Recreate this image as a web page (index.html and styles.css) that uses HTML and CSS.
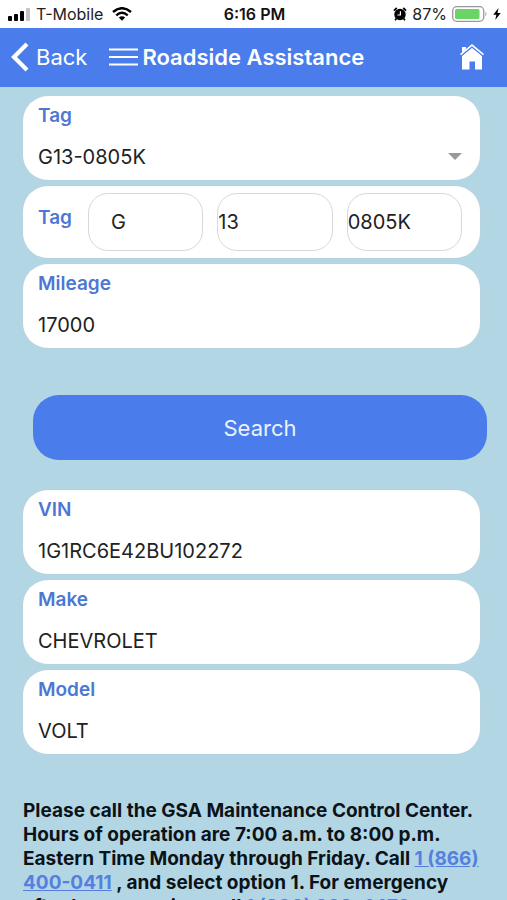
FILE: index.html
```html
<!DOCTYPE html>
<html lang="en">
<head>
<meta charset="utf-8">
<meta name="viewport" content="width=device-width, initial-scale=1">
<title>Roadside Assistance</title>
<link rel="stylesheet" href="styles.css">
</head>
<body>
<div class="status">
  <div class="status-left">
    <svg width="23" height="13" viewBox="0 0 23 13" aria-hidden="true">
      <rect x="0" y="8" width="4" height="5" rx="1" fill="#000"/>
      <rect x="6" y="6" width="4" height="7" rx="1" fill="#000"/>
      <rect x="12" y="3" width="4" height="10" rx="1" fill="#000"/>
      <rect x="18" y="0" width="4" height="13" rx="1" fill="#c4c4c4"/>
    </svg>
    <span>T-Mobile</span>
    <svg class="wifi" width="20" height="14" viewBox="0 0 20 14" fill="none" stroke="#000" stroke-width="2.4" aria-hidden="true">
      <path d="M1 5Q10 -2.6 19 5M4.3 8.3Q10 3.4 15.7 8.3"/>
      <path d="M6.8 10.6Q10 8 13.2 10.6L10 13.8Z" fill="#000" stroke="none"/>
    </svg>
  </div>
  <span class="clock">6:16 PM</span>
  <div class="status-right">
    <svg width="14" height="14" viewBox="0 0 14 14" aria-hidden="true">
      <circle cx="7" cy="7.5" r="5.7"/>
      <path d="M.9 3.6L3.8 1M13.1 3.6L10.2 1M3.5 11.5L2 13.3M10.5 11.5L12 13.3" stroke="#000" stroke-width="1.7"/>
      <path d="M7.4 4.2V8H4.4" fill="none" stroke="#fff" stroke-width="1.2"/>
    </svg>
    <span class="percent">87%</span>
    <svg width="36" height="16" viewBox="0 0 36 16" aria-hidden="true">
      <rect x=".7" y=".7" width="31" height="14.6" rx="4" fill="#fff" stroke="#999" stroke-width="1.3"/>
      <rect x="3" y="3" width="24.5" height="10" rx="1.5" fill="#6bd466"/>
      <path d="M33.5 5.5Q35.5 8 33.5 10.5Z" fill="#999"/>
    </svg>
    <svg width="8" height="12" viewBox="0 0 8 12" aria-hidden="true"><path d="M5.5 0L.3 6.7H3.4L2.2 12L7.7 4.9H4.5Z"/></svg>
  </div>
</div>
<header class="nav">
  <button class="back" type="button">
    <svg width="18" height="30" viewBox="0 0 18 30" fill="none" stroke="#fff" stroke-width="4.2" aria-hidden="true"><path d="M16 2L3 15L16 28"/></svg>
    <span>Back</span>
  </button>
  <button class="menu" type="button" aria-label="Menu">
    <svg width="29" height="18" viewBox="0 0 29 18" stroke="#fff" stroke-width="2" aria-hidden="true"><path d="M0 1.5H29M0 9H29M0 16.5H29"/></svg>
  </button>
  <h1>Roadside Assistance</h1>
  <button class="home" type="button" aria-label="Home">
    <svg width="24" height="26" viewBox="0 0 24 26" aria-hidden="true">
      <path d="M2 12L12 3.5L22 12V25.5H15V17.5H9.5V25.5H2Z" fill="#fff"/>
      <path d="M2 9V3H6V6Z" fill="#fff"/>
      <path d="M.5 11.2L12 2.2L23.5 11.2" fill="none" stroke="#4a7ceb" stroke-width="2.4"/>
      <path d="M.5 10.6L12 1.2L23.5 10.6" fill="none" stroke="#fff" stroke-width="1.7"/>
    </svg>
  </button>
</header>
<main>
  <form class="fields">
    <div class="card dropdown">
      <label for="vehicle">Tag</label>
      <select id="vehicle"><option>G13-0805K</option></select>
    </div>
    <div class="card tag-row">
      <label for="tag-class">Tag</label>
      <div class="parts">
        <input class="first" id="tag-class" value="G">
        <input aria-label="Tag prefix" value="13">
        <input aria-label="Tag number" value="0805K">
      </div>
    </div>
    <div class="card">
      <label for="mileage">Mileage</label>
      <input id="mileage" value="17000">
    </div>
    <button class="search" type="button">Search</button>
    <div class="card">
      <label for="vin">VIN</label>
      <input id="vin" value="1G1RC6E42BU102272">
    </div>
    <div class="card">
      <label for="make">Make</label>
      <input id="make" value="CHEVROLET">
    </div>
    <div class="card">
      <label for="model">Model</label>
      <input id="model" value="VOLT">
    </div>
  </form>
  <p>Please call the GSA Maintenance Control Center. Hours of operation are 7:00 a.m. to 8:00 p.m. Eastern Time Monday through Friday. Call <a href="tel:18664000411">1 (866) 400-0411</a> , and select option 1. For emergency after hours service, call <a href="tel:18009394472">1 (800) 939-4472</a></p>
</main>
</body>
</html>
```

FILE: styles.css
```css
* { box-sizing: border-box; }
body {
  margin: 0;
  height: 100vh;
  display: flex;
  flex-direction: column;
  overflow: hidden;
  background: #b3d6e5;
  color: #222;
  font-family: Inter, "Liberation Sans", sans-serif;
  font-size: 20px;
}
button, input, select {
  font: inherit;
  color: inherit;
  border: 0;
  padding: 0;
  margin: 0;
  background: none;
}
svg { display: block; flex: none; }

.status {
  flex: none;
  height: 28px;
  display: grid;
  grid-template-columns: 1fr auto 1fr;
  align-items: center;
  padding: 0 6px 0 8px;
  background: #fff;
  font-size: 16px;
}
.status-left, .status-right { display: flex; align-items: center; gap: 5px; }
.status-right { justify-content: flex-end; }
.wifi { margin-left: 4px; }
.clock { font-weight: 600; color: #111; }

.nav {
  flex: none;
  height: 59px;
  display: flex;
  align-items: center;
  padding: 0 23px 2px 11px;
  background: #4a7ceb;
  color: #fff;
}
.back { display: flex; align-items: center; gap: 7px; font-size: 22px; }
.menu { margin: 0 4px 0 22px; }
.nav h1 { margin: 0; font-size: 22px; font-weight: 600; white-space: nowrap; }
.home { margin-left: auto; }

main {
  flex: 1;
  min-height: 0;
  overflow-y: auto;
  scrollbar-width: none;
  padding: 9px 20px 24px 23px;
}
.fields { display: flex; flex-direction: column; gap: 6px; }
.card {
  height: 84px;
  margin-right: 7px;
  padding: 8px 15px;
  display: flex;
  flex-direction: column;
  justify-content: space-between;
  background: #fff;
  border-radius: 25px;
  box-shadow: 0 0 2px #c2cdd2;
}
.card label { color: #4c78d4; font-size: 19px; font-weight: 600; line-height: 24px; }
.card input, .card select { width: 100%; height: 30px; }
.card select { appearance: none; }
.dropdown { position: relative; }
.dropdown::after {
  content: "";
  position: absolute;
  right: 18px;
  bottom: 20px;
  border: 7px solid transparent;
  border-top-color: #999;
  border-bottom: 0;
  pointer-events: none;
}
.card.tag-row {
  height: 72px;
  flex-direction: row;
  align-items: center;
  gap: 16px;
  padding: 8px 18px 8px 15px;
}
.tag-row label { padding-bottom: 8px; }
.parts { flex: 1; display: grid; grid-template-columns: repeat(3, 1fr); gap: 14px; }
.card .parts input {
  min-width: 0;
  height: 58px;
  border: 1px solid #d8d8d8;
  border-radius: 20px;
}
.card .parts .first { padding-left: 22px; }
.search {
  height: 65px;
  margin: 41px 0 24px 10px;
  border-radius: 26px;
  background: #4a7ceb;
  color: #e8f2ff;
  font-size: 22px;
}
p {
  margin: 45px 0 0;
  color: #0b1318;
  font-size: 19px;
  font-weight: 700;
  line-height: 24px;
}
p a { color: #5580df; }
```
